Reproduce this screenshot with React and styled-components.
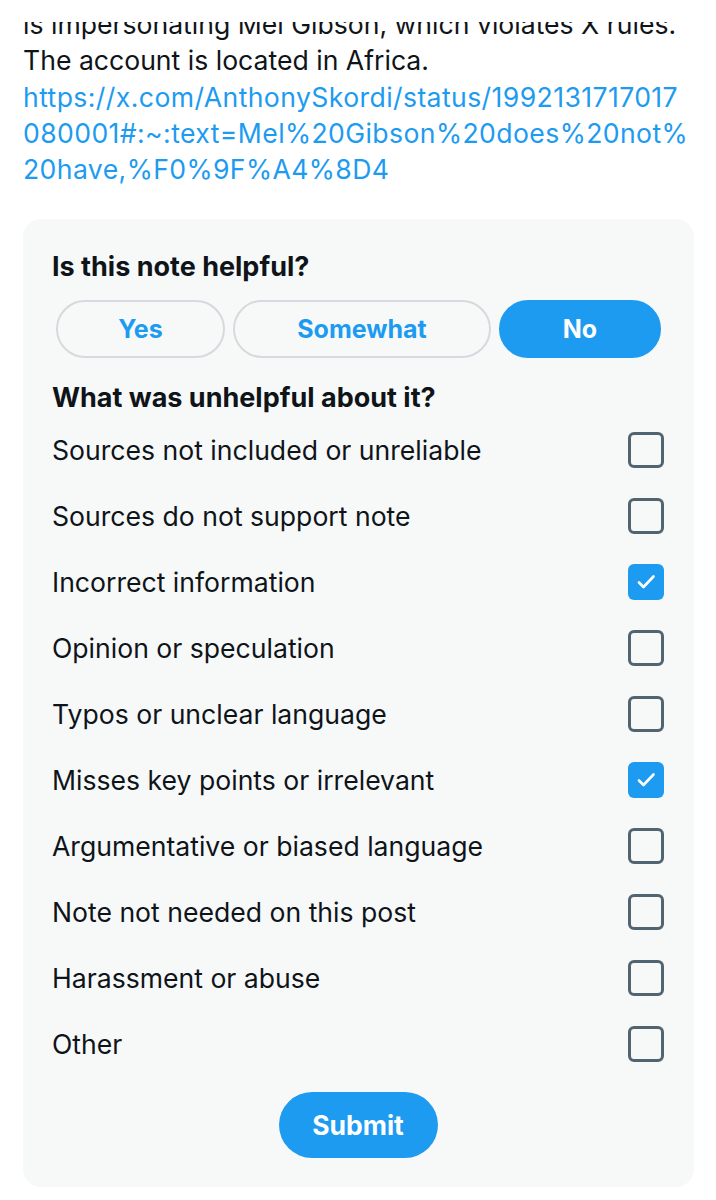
import React, { useState } from "react";
import styled, { createGlobalStyle } from "styled-components";

const GlobalStyle = createGlobalStyle`
  html, body {
    margin: 0;
    padding: 0;
    background: #ffffff;
    overflow: hidden;
  }
  body {
    font-family: Inter, Roboto, "Noto Sans", "Liberation Sans", sans-serif;
    -webkit-font-smoothing: antialiased;
  }
`;

const Page = styled.div`
  width: 716px;
  height: 1200px;
  padding-top: 22px;
  box-sizing: border-box;
  background: #ffffff;
`;

const Scroller = styled.div`
  height: 100%;
  overflow: hidden;
  display: flex;
  flex-direction: column;
`;

const PostText = styled.div`
  margin-top: -16px;
  padding: 0 20px 0 23px;
  font-size: 26.6px;
  line-height: 36.3px;
  color: #0f1419;
`;

const Link = styled.a`
  color: #1d9bf0;
  text-decoration: none;
  letter-spacing: 0.4px;
  word-break: break-all;
`;

const Card = styled.section`
  margin: 32px 22px 0 23px;
  background: #f7f9f9;
  border-radius: 18px;
  padding: 32px 30px 29px 29px;
  display: flex;
  flex-direction: column;
`;

const Heading = styled.h2`
  margin: 0;
  font-size: 27px;
  line-height: 32px;
  font-weight: 700;
  color: #0f1419;
`;

const ChoiceRow = styled.div`
  display: grid;
  grid-template-columns: 169px 258px 162px;
  gap: 8px;
  margin: 17px 0 0 4px;
`;

const Choice = styled.button`
  height: 58px;
  border-radius: 29px;
  border: 2px solid ${(p) => (p.$active ? "#1d9bf0" : "#d4dade")};
  background: ${(p) => (p.$active ? "#1d9bf0" : "transparent")};
  color: ${(p) => (p.$active ? "#ffffff" : "#1d9bf0")};
  font-family: inherit;
  font-size: 25px;
  font-weight: 700;
  cursor: pointer;
  padding: 0;
`;

const SubHeading = styled(Heading)`
  margin-top: 24px;
`;

const Options = styled.ul`
  list-style: none;
  margin: 2px 0 0;
  padding: 0;
  display: flex;
  flex-direction: column;
`;

const Option = styled.li`
  height: 66.1px;
  display: flex;
  align-items: center;
  justify-content: space-between;
  font-size: 26.6px;
  color: #0f1419;
`;

const Box = styled.span`
  width: 36px;
  height: 36px;
  box-sizing: border-box;
  border-radius: 6px;
  border: ${(p) => (p.$checked ? "none" : "3px solid #536471")};
  background: ${(p) => (p.$checked ? "#1d9bf0" : "transparent")};
  display: flex;
  align-items: center;
  justify-content: center;
`;

const SubmitButton = styled.button`
  align-self: center;
  margin-top: 15px;
  width: 159px;
  height: 66px;
  border: none;
  border-radius: 33px;
  background: #1d9bf0;
  color: #ffffff;
  font-family: inherit;
  font-size: 26.5px;
  font-weight: 700;
  cursor: pointer;
`;

const Check = () => (
  <svg width="24" height="24" viewBox="0 0 24 24" fill="none">
    <path
      d="M5 12.5l4.5 4.5L19.5 6.5"
      stroke="#ffffff"
      strokeWidth="2.6"
      strokeLinecap="round"
      strokeLinejoin="round"
    />
  </svg>
);

const reasons = [
  { label: "Sources not included or unreliable", checked: false },
  { label: "Sources do not support note", checked: false },
  { label: "Incorrect information", checked: true },
  { label: "Opinion or speculation", checked: false },
  { label: "Typos or unclear language", checked: false },
  { label: "Misses key points or irrelevant", checked: true },
  { label: "Argumentative or biased language", checked: false },
  { label: "Note not needed on this post", checked: false },
  { label: "Harassment or abuse", checked: false },
  { label: "Other", checked: false },
];

export default function App() {
  const [choice, setChoice] = useState("No");
  const [checks, setChecks] = useState(reasons.map((r) => r.checked));

  const toggle = (i) =>
    setChecks((prev) => prev.map((v, j) => (j === i ? !v : v)));

  return (
    <Page>
      <GlobalStyle />
      <Scroller>
        <PostText>
          is impersonating Mel Gibson, which violates X rules.
          <br />
          The account is located in Africa.
          <br />
          <Link href="#">
            https://x.com/AnthonySkordi/status/1992131717017
            <br />
            080001#:~:text=Mel%20Gibson%20does%20not%
            <br />
            20have,%F0%9F%A4%8D4
          </Link>
        </PostText>
        <Card>
          <Heading>Is this note helpful?</Heading>
          <ChoiceRow>
            {["Yes", "Somewhat", "No"].map((c) => (
              <Choice key={c} $active={choice === c} onClick={() => setChoice(c)}>
                {c}
              </Choice>
            ))}
          </ChoiceRow>
          <SubHeading>What was unhelpful about it?</SubHeading>
          <Options>
            {reasons.map((r, i) => (
              <Option key={r.label} onClick={() => toggle(i)}>
                {r.label}
                <Box $checked={checks[i]}>{checks[i] && <Check />}</Box>
              </Option>
            ))}
          </Options>
          <SubmitButton>Submit</SubmitButton>
        </Card>
      </Scroller>
    </Page>
  );
}
